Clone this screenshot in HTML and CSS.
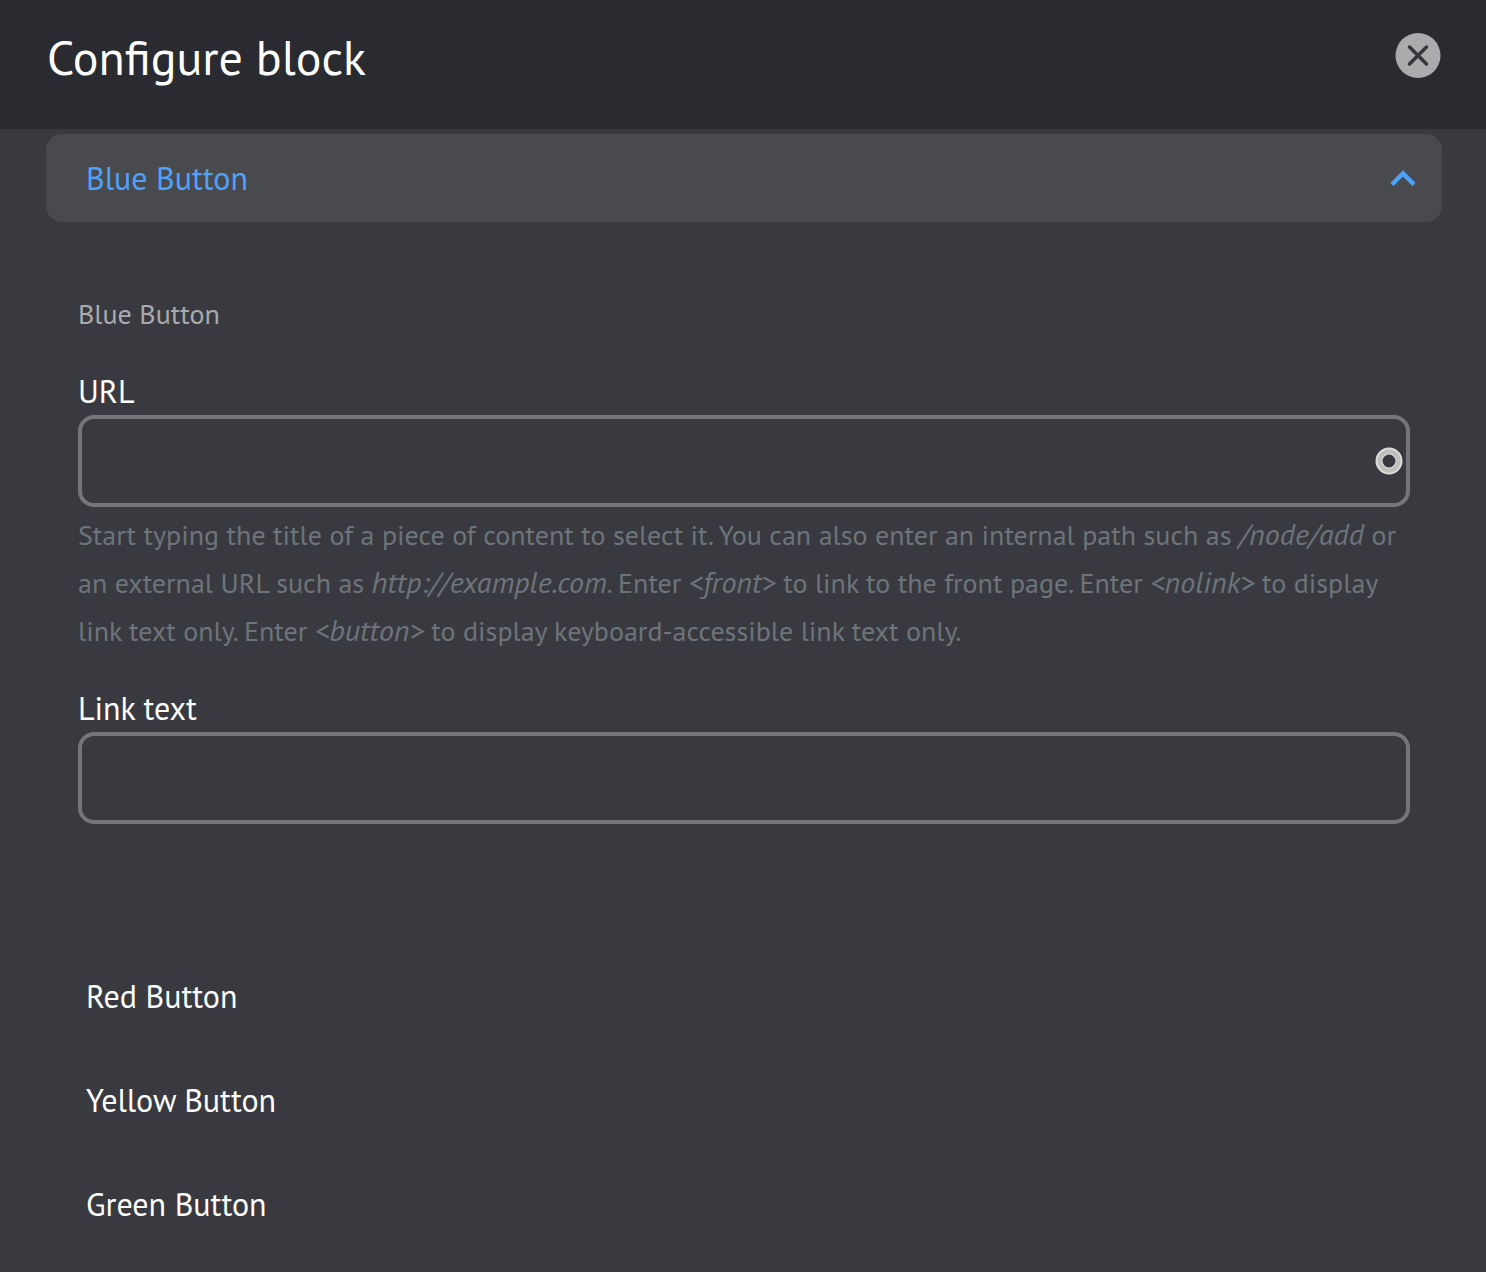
FILE: index.html
```html
<!DOCTYPE html>
<html lang="en">
<head>
<meta charset="utf-8">
<title>Configure block</title>
<meta name="viewport" content="width=device-width, initial-scale=1">
<link rel="stylesheet" href="styles.css">
</head>
<body>
<header class="dialog-header">
  <h1 class="dialog-title">Configure block</h1>
  <button class="close" type="button" aria-label="Close">
    <svg viewBox="0 0 46 46" width="46" height="46" aria-hidden="true">
      <circle cx="23" cy="22.500" r="22.5" fill="#aaabad"/>
      <path d="M14.500 14 31.500 31M31.500 14 14.500 31" stroke="#35363b" stroke-width="3.5" stroke-linecap="round"/>
    </svg>
  </button>
</header>
<main class="accordion">
  <section class="item">
    <button class="toggle toggle-open" type="button" aria-expanded="true" aria-controls="blue-panel">
      <span>Blue Button</span>
      <svg viewBox="0 0 26 18" width="26" height="18" fill="none" aria-hidden="true">
        <path d="M2 15.500 13 4.500 24 15.500" stroke="#4fa1fa" stroke-width="4.5"/>
      </svg>
    </button>
    <fieldset class="panel" id="blue-panel">
      <legend class="legend">Blue Button</legend>
      <div class="field">
        <label class="label" for="url">URL</label>
        <div class="control">
          <input class="input" id="url" type="text" aria-describedby="url-help">
          <svg class="throbber" viewBox="0 0 28 28" width="28" height="28" fill="none" aria-hidden="true">
            <circle cx="14" cy="14" r="10" stroke="#dcdcda" stroke-width="7"/>
            <circle cx="14" cy="14" r="9.500" stroke="#bfc0bd" stroke-width="4"/>
          </svg>
        </div>
        <p class="help" id="url-help">Start typing the title of a piece of content to select it. You can also enter an internal path such as <em>/node/add</em> or an external URL such as <em>http://example.com</em>. Enter <em>&lt;front&gt;</em> to link to the front page. Enter <em>&lt;nolink&gt;</em> to display link text only. Enter <em>&lt;button&gt;</em> to display keyboard-accessible link text only.</p>
      </div>
      <div class="field">
        <label class="label" for="link-text">Link text</label>
        <input class="input" id="link-text" type="text">
      </div>
    </fieldset>
  </section>
  <button class="toggle" type="button" aria-expanded="false">Red Button</button>
  <button class="toggle" type="button" aria-expanded="false">Yellow Button</button>
  <button class="toggle" type="button" aria-expanded="false">Green Button</button>
</main>
</body>
</html>
```
FILE: styles.css
```css
* {
  box-sizing: border-box;
}

body {
  margin: 0;
  background: #393a3f;
  color: #fff;
  font-family: "PT Sans", Lato, "Noto Sans", sans-serif;
  font-size: 32px;
  line-height: 48px;
}

.dialog-header {
  display: flex;
  justify-content: space-between;
  align-items: flex-start;
  padding: 33px 45px 48px 47px;
  background: #2a2b30;
}

.dialog-title {
  margin: 0;
  font-size: 48px;
  font-weight: 500;
  line-height: 48px;
}

.close {
  display: flex;
  padding: 0;
  border: 0;
  background: none;
}

.accordion {
  display: flex;
  flex-direction: column;
  gap: 16px;
  padding: 5px 44px 16px 46px;
}

.toggle {
  display: flex;
  justify-content: space-between;
  align-items: center;
  width: 100%;
  height: 88px;
  padding: 0 26px 0 40px;
  border: 0;
  border-radius: 16px;
  background: none;
  color: #fff;
  font: inherit;
  font-weight: 500;
  text-align: left;
}

.toggle-open {
  background: #484a4e;
  color: #4fa1fa;
}

.panel {
  display: flex;
  flex-direction: column;
  gap: 29px;
  min-width: 0;
  margin: 0;
  padding: 29px 32px 112px;
  border: 0;
}

.legend {
  padding: 68px 0 0;
  color: #a9aaad;
  font-size: 28px;
}

.control {
  position: relative;
}

.label {
  display: block;
}

.input {
  display: block;
  width: 100%;
  height: 92px;
  padding: 0 32px;
  border: 4px solid #75767a;
  border-radius: 16px;
  background: transparent;
  color: #fff;
  font: inherit;
}

.throbber {
  position: absolute;
  top: 32px;
  right: 7px;
}

.help {
  margin: 4px 0 0;
  color: #6d747a;
  font-size: 28px;
}

.help em {
  font-size: 30px;
  line-height: 40px;
}
```
